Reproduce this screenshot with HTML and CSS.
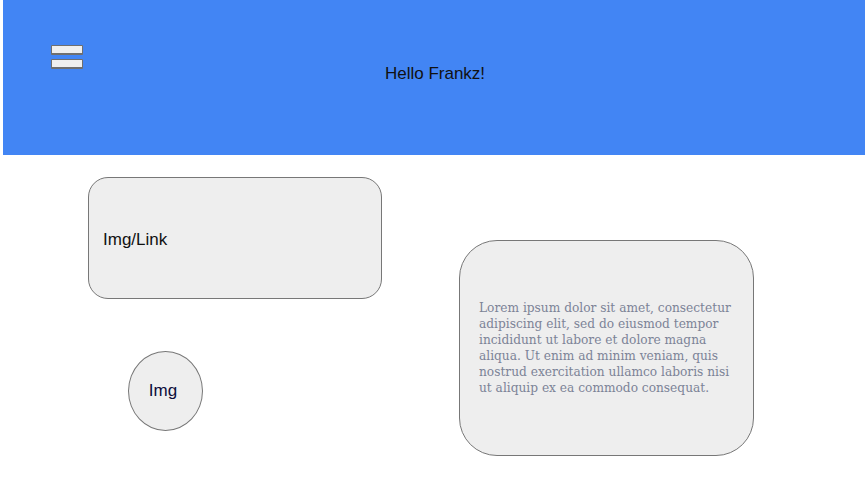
FILE: index.html
```html
<!DOCTYPE html>
<html>
<head>
<meta charset="utf-8">
<link rel="stylesheet" href="styles.css">
</head>
<body>
<header class="topbar">
  <div class="menu">
    <span class="bar"></span>
    <span class="bar"></span>
  </div>
  <div class="greeting">Hello Frankz!</div>
</header>
<main class="content">
  <div class="left-col">
    <div class="card">Img/Link</div>
    <div class="avatar">Img</div>
  </div>
  <div class="right-col">
    <div class="textbox">Lorem ipsum dolor sit amet, consectetur adipiscing elit, sed do eiusmod tempor incididunt ut labore et dolore magna aliqua. Ut enim ad minim veniam, quis nostrud exercitation ullamco laboris nisi ut aliquip ex ea commodo consequat.</div>
  </div>
</main>
</body>
</html>
```
FILE: styles.css
```css
html, body {
  margin: 0;
  padding: 0;
  background: #fff;
  font-family: "Liberation Sans", Arial, sans-serif;
}
.topbar {
  margin-left: 3px;
  height: 155px;
  background: #4285f4;
  display: flex;
  align-items: flex-start;
  box-sizing: border-box;
  padding: 45px 0 0 48px;
}
.menu {
  display: flex;
  flex-direction: column;
  gap: 4px;
}
.bar {
  display: block;
  width: 32px;
  height: 10px;
  box-sizing: border-box;
  background: #efefef;
  border: 1px solid #6f6f6f;
  border-bottom-width: 2px;
  border-radius: 1px;
}
.greeting {
  flex: 1;
  text-align: center;
  font-size: 17px;
  color: #111;
  padding-top: 19px;
  padding-right: 78px;
}
.content {
  display: flex;
  padding: 22px 0 0 88px;
}
.left-col {
  display: flex;
  flex-direction: column;
  width: 294px;
}
.card {
  width: 294px;
  height: 122px;
  box-sizing: border-box;
  background: #eeeeee;
  border: 1px solid #777;
  border-radius: 20px;
  display: flex;
  align-items: center;
  padding: 3px 0 0 14px;
  font-size: 17px;
  color: #111;
}
.avatar {
  margin: 52px 0 0 40px;
  width: 75px;
  height: 80px;
  box-sizing: border-box;
  border: 1px solid #777;
  border-radius: 50%;
  background: #eeeeee;
  display: flex;
  align-items: center;
  justify-content: center;
  padding-right: 5px;
  font-size: 17px;
  color: #0c0c3a;
}
.right-col {
  padding: 63px 0 0 77px;
}
.textbox {
  width: 295px;
  height: 216px;
  box-sizing: border-box;
  background: #eeeeee;
  border: 1px solid #777;
  border-radius: 38px;
  display: flex;
  align-items: center;
  padding: 0 16px 0 19px;
  font-family: "DejaVu Serif", Georgia, serif;
  font-size: 12.2px;
  line-height: 16px;
  color: #7c8397;
}
```
